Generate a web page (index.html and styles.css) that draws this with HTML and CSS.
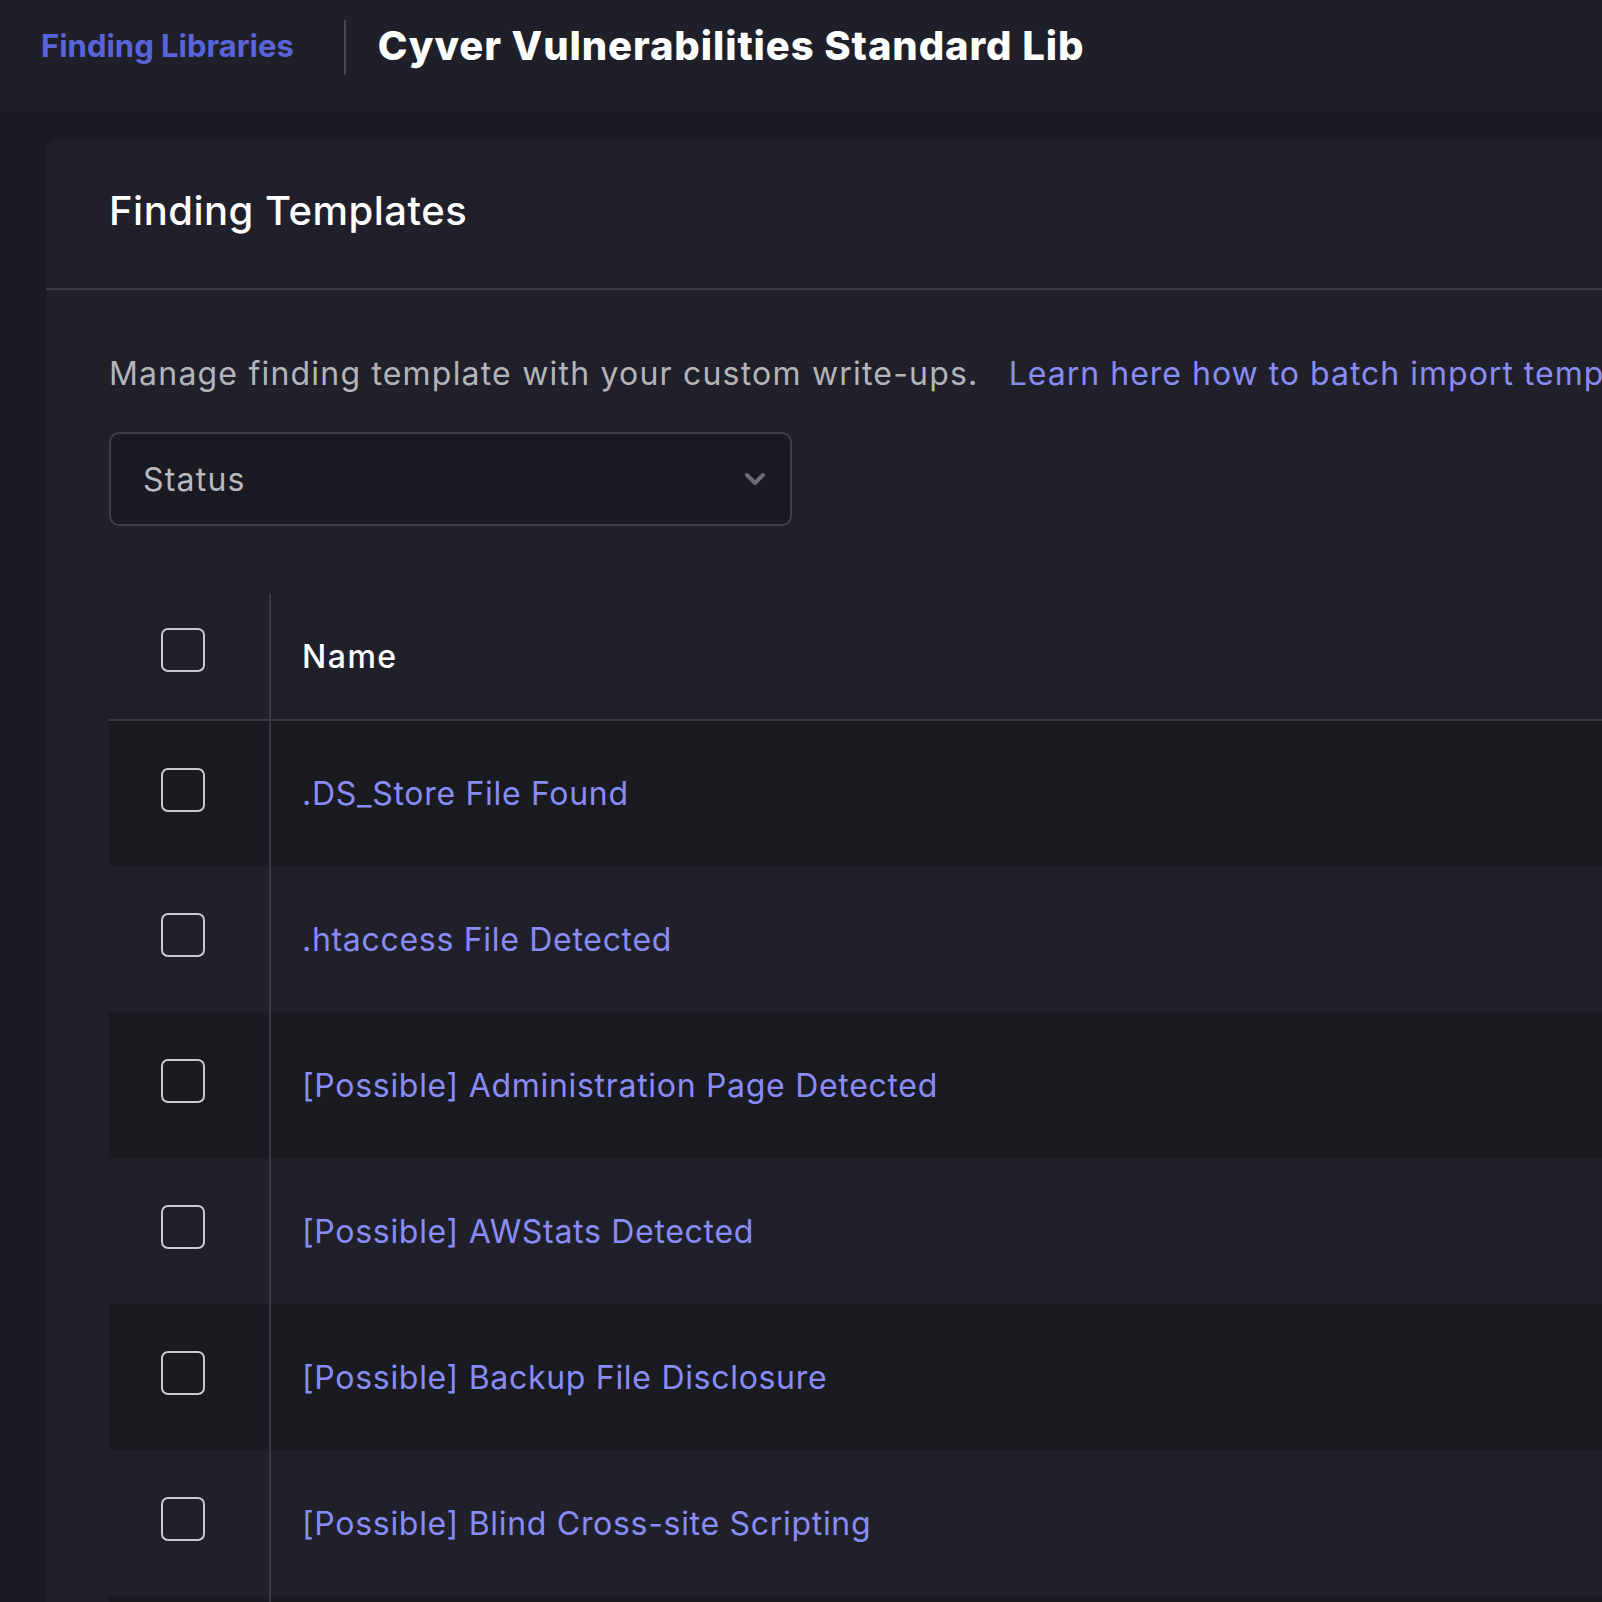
FILE: index.html
```html
<!DOCTYPE html>
<html lang="en">
<head>
    <meta charset="UTF-8">
    <meta name="viewport" content="width=device-width, initial-scale=1.0">
    <title>Cyver Vulnerabilities Standard Lib - Finding Libraries</title>
    <link rel="stylesheet" href="styles.css">
</head>
<body>
    <header class="top-bar">
        <a href="#" class="crumb-link">Finding Libraries</a>
        <span class="crumb-divider"></span>
        <h1 class="page-title">Cyver Vulnerabilities Standard Lib</h1>
    </header>

    <main class="page-body">
        <section class="card">
            <div class="card-header">
                <h2>Finding Templates</h2>
            </div>

            <div class="card-content">
                <p class="intro">
                    Manage finding template with your custom write-ups.
                    <a href="#" class="help-link">Learn here how to batch import templates</a>
                </p>

                <div class="status-select">
                    <span>Status</span>
                    <svg class="chevron" width="22" height="14" viewBox="0 0 22 14">
                        <path d="M3 3 L11 11 L19 3" fill="none" stroke="#6c6c78" stroke-width="4" stroke-linecap="round" stroke-linejoin="round"/>
                    </svg>
                </div>

                <table class="templates">
                    <thead>
                        <tr>
                            <th class="check-col"><span class="checkbox"></span></th>
                            <th>Name</th>
                        </tr>
                    </thead>
                    <tbody>
                        <tr>
                            <td class="check-col"><span class="checkbox"></span></td>
                            <td><a href="#">.DS_Store File Found</a></td>
                        </tr>
                        <tr>
                            <td class="check-col"><span class="checkbox"></span></td>
                            <td><a href="#">.htaccess File Detected</a></td>
                        </tr>
                        <tr>
                            <td class="check-col"><span class="checkbox"></span></td>
                            <td><a href="#">[Possible] Administration Page Detected</a></td>
                        </tr>
                        <tr>
                            <td class="check-col"><span class="checkbox"></span></td>
                            <td><a href="#">[Possible] AWStats Detected</a></td>
                        </tr>
                        <tr>
                            <td class="check-col"><span class="checkbox"></span></td>
                            <td><a href="#">[Possible] Backup File Disclosure</a></td>
                        </tr>
                        <tr>
                            <td class="check-col"><span class="checkbox"></span></td>
                            <td><a href="#">[Possible] Blind Cross-site Scripting</a></td>
                        </tr>
                        <tr>
                            <td class="check-col"></td>
                            <td></td>
                        </tr>
                    </tbody>
                </table>
            </div>
        </section>
    </main>
</body>
</html>
```

FILE: styles.css
```css
* {
    margin: 0;
    padding: 0;
    box-sizing: border-box;
}

html, body {
    height: 100%;
    overflow: hidden;
}

body {
    font-family: 'Inter', 'Noto Sans', sans-serif;
    background-color: #1a1a22;
    color: #ffffff;
}

a {
    text-decoration: none;
}

.top-bar {
    height: 112px;
    background-color: #1f1f29;
    display: flex;
    align-items: flex-start;
    padding: 20px 0 0 41px;
}

.crumb-link,
.crumb-divider,
.page-title {
    height: 55px;
    display: flex;
    align-items: center;
}

.crumb-link {
    color: #5a64da;
    font-size: 31px;
    font-weight: 700;
    padding-bottom: 4px;
}

.crumb-divider {
    width: 2px;
    background-color: #45454f;
    margin: 0 32px 0 50px;
}

.page-title {
    font-size: 40px;
    font-weight: 800;
    letter-spacing: 0.9px;
    padding-bottom: 4px;
}

.page-body {
    padding: 27px 0 0 46px;
    height: calc(100% - 112px);
}

.card {
    background-color: #20202a;
    border-top-left-radius: 12px;
    min-height: 100%;
}

.card-header {
    height: 151px;
    display: flex;
    align-items: center;
    padding: 0 0 6px 63px;
    border-bottom: 2px solid #3a3a46;
}

.card-header h2 {
    font-size: 40px;
    font-weight: 500;
    letter-spacing: 0.5px;
}

.card-content {
    padding: 60px 0 0 63px;
}

.intro {
    font-size: 32px;
    line-height: 48px;
    letter-spacing: 1.2px;
    color: #b4b4ba;
    white-space: nowrap;
}

.help-link {
    color: #8a8cf6;
    margin-left: 20px;
    letter-spacing: 1px;
}

.status-select {
    width: 683px;
    height: 94px;
    margin-top: 34px;
    border: 2px solid #3f3f4b;
    border-radius: 10px;
    background-color: #1a1a22;
    display: flex;
    align-items: center;
    justify-content: space-between;
    padding: 0 24px 0 32px;
    font-size: 32px;
    letter-spacing: 1.2px;
    color: #b8b8be;
}

.templates {
    margin-top: 67px;
    width: 100%;
    border-collapse: collapse;
}

.templates th,
.templates td {
    text-align: left;
    padding-left: 31px;
    font-size: 32px;
}

.templates th {
    height: 127px;
    font-weight: 500;
    letter-spacing: 1.5px;
    color: #ffffff;
    border-bottom: 2px solid #3a3a46;
}

.templates td {
    height: 146px;
    letter-spacing: 0.7px;
}

.templates td a {
    color: #8a8cf6;
}

.templates tbody tr:nth-child(odd) {
    background-color: #1a1a21;
}

.templates .check-col {
    width: 161px;
    padding-left: 52px;
    border-right: 2px solid #3a3a46;
}

.checkbox {
    display: block;
    width: 44px;
    height: 44px;
    margin-bottom: 8px;
    border: 2px solid #c9c9d0;
    border-radius: 7px;
}

th .checkbox {
    margin-bottom: 12px;
}
```
